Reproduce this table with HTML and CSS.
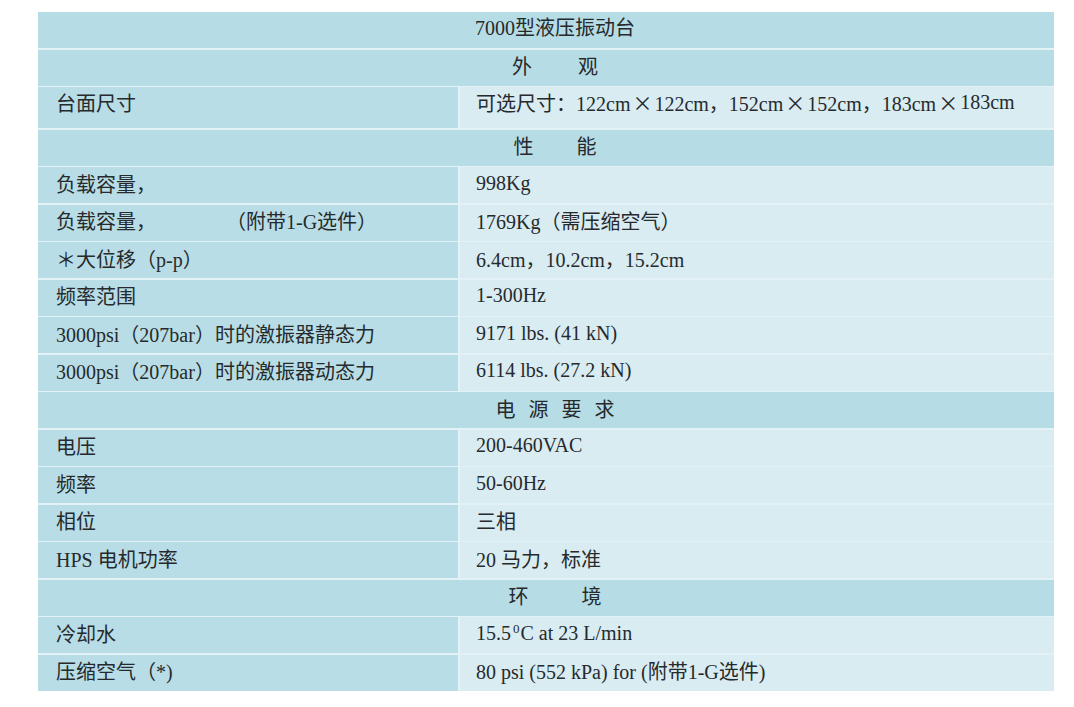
FILE: index.html
```html
<!DOCTYPE html>
<html lang="zh-CN">
<head>
<meta charset="utf-8">
<title>7000型液压振动台</title>
<link rel="stylesheet" href="styles.css">
</head>
<body>
<div class="spec">
  <div class="head title">7000型液压振动台</div>

  <div class="head sec sec-a"><span>外</span><span>观</span></div>
  <div class="key tall">台面尺寸</div>
  <div class="val tall">可选尺寸：122cm<span class="x">×</span>122cm，152cm<span class="x">×</span>152cm，183cm<span class="x">×</span>183cm</div>

  <div class="head sec sec-b"><span>性</span><span>能</span></div>
  <div class="key">负载容量，</div>
  <div class="val">998Kg</div>
  <div class="key">负载容量，<span class="opt">（附带1-G选件）</span></div>
  <div class="val">1769Kg（需压缩空气）</div>
  <div class="key">＊大位移（p-p）</div>
  <div class="val">6.4cm，10.2cm，15.2cm</div>
  <div class="key">频率范围</div>
  <div class="val">1-300Hz</div>
  <div class="key">3000psi（207bar）时的激振器静态力</div>
  <div class="val">9171 lbs. (41 kN)</div>
  <div class="key">3000psi（207bar）时的激振器动态力</div>
  <div class="val">6114 lbs. (27.2 kN)</div>

  <div class="head sec sec-c"><span>电</span><span>源</span><span>要</span><span>求</span></div>
  <div class="key">电压</div>
  <div class="val">200-460VAC</div>
  <div class="key">频率</div>
  <div class="val">50-60Hz</div>
  <div class="key">相位</div>
  <div class="val">三相</div>
  <div class="key">HPS 电机功率</div>
  <div class="val">20 马力，标准</div>

  <div class="head sec sec-d"><span>环</span><span>境</span></div>
  <div class="key">冷却水</div>
  <div class="val">15.5<sup>0</sup>C at 23 L/min</div>
  <div class="key">压缩空气（*)</div>
  <div class="val">80 psi (552 kPa) for (附带1-G选件)</div>
</div>
</body>
</html>
```

FILE: styles.css
```css
html, body {
  margin: 0;
  padding: 0;
  background: #ffffff;
}

body {
  font-family: "Liberation Serif", "Noto Sans CJK SC", serif;
  font-size: 20px;
  color: #262a2c;
}

.spec {
  display: grid;
  grid-template-columns: 420px 594.5px;
  grid-auto-rows: minmax(36px, auto);
  gap: 1.5px 1.5px;
  margin: 12px 0 0 38px;
  width: 1016px;
  background: #e3f2f6;
}

.head,
.key,
.val {
  display: flex;
  align-items: center;
  white-space: nowrap;
  box-sizing: border-box;
  padding-bottom: 4px;
}

.head {
  grid-column: 1 / span 2;
  background: #b6dce5;
  justify-content: center;
  padding-left: 18px;
}

.title {
  padding-bottom: 7px;
}

.sec-a { gap: 46px; }
.sec-b { gap: 43px; }
.sec-c { gap: 13px; }
.sec-d { gap: 53px; }

.key {
  background: #b8dde6;
  padding-left: 18px;
}

.val {
  background: #d9ecf2;
  padding-left: 16.5px;
}

.tall {
  height: 41px;
  padding-bottom: 10px;
}

.opt {
  margin-left: 70px;
}

.x {
  font-family: "Noto Sans CJK SC", sans-serif;
  margin: 0 2px;
}

sup {
  font-size: 13px;
  line-height: 0;
  position: relative;
  top: -4px;
  vertical-align: baseline;
  margin: 0 1px 0 2px;
}
```
